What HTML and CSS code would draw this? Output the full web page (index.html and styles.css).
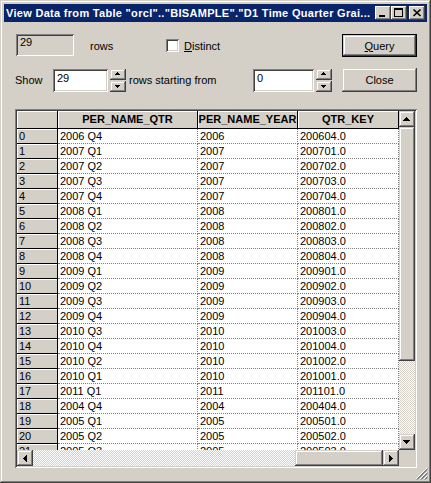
FILE: index.html
```html
<html>
<head>
    <title>View Data</title>
    <meta http-equiv="Content-Type" content="text/html; charset=UTF-8"/>
    <link rel="stylesheet" href="styles.css">
</head>
<body>
<div class="window">
    <div class="titlebar">
        <span class="title">View Data from Table "orcl".."BISAMPLE"."D1 Time Quarter Grai...</span>
        <div class="caption-btns">
            <div class="cbtn"><svg width="16" height="14"><rect x="4" y="9" width="6" height="2" fill="#000"/></svg></div>
            <div class="cbtn"><svg width="16" height="14"><path d="M3 2h9v9H3z M4 4v6h7V4z" fill="#000" fill-rule="evenodd"/></svg></div>
            <div class="cbtn cbtn-close"><svg width="16" height="14"><path d="M4.5 3.5l7 6.5M11.5 3.5l-7 6.5" stroke="#000" stroke-width="1.7"/></svg></div>
        </div>
    </div>
    <div class="content">
        <div class="row row-top">
            <div class="ro-field">29</div>
            <span class="lbl-rows">rows</span>
            <span class="check"></span>
            <span class="lbl-distinct"><u>D</u>istinct</span>
            <div class="btn btn-default"><u>Q</u>uery</div>
        </div>
        <div class="row row-show">
            <span class="lbl-show">Show</span>
            <div class="field">29</div>
            <div class="spin">
                <div class="spin-btn"><svg width="15" height="10"><path d="M7 3h1v1h1v1h1v1H5V5h1V4h1z" fill="#000"/></svg></div>
                <div class="spin-btn"><svg width="15" height="10"><path d="M5 4h5v1H9v1H8v1H7V6H6V5H5z" fill="#000"/></svg></div>
            </div>
            <span class="lbl-start">rows starting from</span>
            <div class="field field-wide">0</div>
            <div class="spin">
                <div class="spin-btn"><svg width="15" height="10"><path d="M7 3h1v1h1v1h1v1H5V5h1V4h1z" fill="#000"/></svg></div>
                <div class="spin-btn"><svg width="15" height="10"><path d="M5 4h5v1H9v1H8v1H7V6H6V5H5z" fill="#000"/></svg></div>
            </div>
            <div class="btn btn-close">Close</div>
        </div>
        <div class="grid-frame">
            <div class="grid-inner">
                <div class="table-view">
                    <table class="data">
                        <colgroup>
                            <col style="width:41px">
                            <col style="width:140px">
                            <col style="width:100px">
                            <col style="width:101px">
                        </colgroup>
                        <tr><th class="colhead"></th><th class="colhead">PER_NAME_QTR</th><th class="colhead">PER_NAME_YEAR</th><th class="colhead">QTR_KEY</th></tr>
                        <tr><th class="rowhead">0</th><td>2006 Q4</td><td>2006</td><td>200604.0</td></tr>
                        <tr><th class="rowhead">1</th><td>2007 Q1</td><td>2007</td><td>200701.0</td></tr>
                        <tr><th class="rowhead">2</th><td>2007 Q2</td><td>2007</td><td>200702.0</td></tr>
                        <tr><th class="rowhead">3</th><td>2007 Q3</td><td>2007</td><td>200703.0</td></tr>
                        <tr><th class="rowhead">4</th><td>2007 Q4</td><td>2007</td><td>200704.0</td></tr>
                        <tr><th class="rowhead">5</th><td>2008 Q1</td><td>2008</td><td>200801.0</td></tr>
                        <tr><th class="rowhead">6</th><td>2008 Q2</td><td>2008</td><td>200802.0</td></tr>
                        <tr><th class="rowhead">7</th><td>2008 Q3</td><td>2008</td><td>200803.0</td></tr>
                        <tr><th class="rowhead">8</th><td>2008 Q4</td><td>2008</td><td>200804.0</td></tr>
                        <tr><th class="rowhead">9</th><td>2009 Q1</td><td>2009</td><td>200901.0</td></tr>
                        <tr><th class="rowhead">10</th><td>2009 Q2</td><td>2009</td><td>200902.0</td></tr>
                        <tr><th class="rowhead">11</th><td>2009 Q3</td><td>2009</td><td>200903.0</td></tr>
                        <tr><th class="rowhead">12</th><td>2009 Q4</td><td>2009</td><td>200904.0</td></tr>
                        <tr><th class="rowhead">13</th><td>2010 Q3</td><td>2010</td><td>201003.0</td></tr>
                        <tr><th class="rowhead">14</th><td>2010 Q4</td><td>2010</td><td>201004.0</td></tr>
                        <tr><th class="rowhead">15</th><td>2010 Q2</td><td>2010</td><td>201002.0</td></tr>
                        <tr><th class="rowhead">16</th><td>2010 Q1</td><td>2010</td><td>201001.0</td></tr>
                        <tr><th class="rowhead">17</th><td>2011 Q1</td><td>2011</td><td>201101.0</td></tr>
                        <tr><th class="rowhead">18</th><td>2004 Q4</td><td>2004</td><td>200404.0</td></tr>
                        <tr><th class="rowhead">19</th><td>2005 Q1</td><td>2005</td><td>200501.0</td></tr>
                        <tr><th class="rowhead">20</th><td>2005 Q2</td><td>2005</td><td>200502.0</td></tr>
                        <tr><th class="rowhead">21</th><td>2005 Q3</td><td>2005</td><td>200503.0</td></tr>
                    </table>
                </div>
                <div class="vscroll">
                    <div class="sb-btn"><svg width="16" height="16"><path d="M7 6h1v1h1v1h1v1h1v1H4V9h1V8h1V7h1z" fill="#000"/></svg></div>
                    <div class="sb-thumb sb-thumb-v"></div>
                    <div class="sb-track"></div>
                    <div class="sb-btn"><svg width="16" height="16"><path d="M4 6h7v1h-1v1h-1v1h-1v1H7V9H6V8H5V7H4z" fill="#000"/></svg></div>
                </div>
                <div class="hscroll">
                    <div class="sb-btn"><svg width="16" height="16"><path d="M6 8h1V7h1V6h1V5h1v7H9v-1H8v-1H7V9H6z" fill="#000"/></svg></div>
                    <div class="sb-track"></div>
                    <div class="sb-thumb sb-thumb-h"></div>
                    <div class="sb-btn"><svg width="16" height="16"><path d="M6 5h1v1h1v1h1v1h1v1H9v1H8v1H7v1H6z" fill="#000"/></svg></div>
                </div>
                <div class="corner"></div>
            </div>
        </div>
    </div>
    <svg class="grip" width="12" height="12">
        <path d="M11 0L0 11M11 4L4 11M11 8L8 11" stroke="#fff" stroke-width="1"/>
        <path d="M11.5 0.5L0.5 11.5M11.5 1.5L1.5 11.5M11.5 4.5L4.5 11.5M11.5 5.5L5.5 11.5M11.5 8.5L8.5 11.5M11.5 9.5L9.5 11.5" stroke="#808080" stroke-width="1"/>
    </svg>
</div>
</body>
</html>
```

FILE: styles.css
```css
* {
    box-sizing: border-box;
}

html, body {
    margin: 0px;
    background: #D4D0C8;
    color: #000;
    font-family: "Liberation Sans", Arial, sans-serif;
    font-size: 11px;
}

/* window frame */
.window {
    position: relative;
    width: 431px;
    height: 483px;
    padding: 4px;
    background: #D4D0C8;
    box-shadow: inset -1px -1px #404040, inset 1px 1px #D4D0C8, inset -2px -2px #808080, inset 2px 2px #fff;
    display: flex;
    flex-direction: column;
}

.titlebar {
    height: 18px;
    background: #0A246A;
    color: #fff;
    font-weight: bold;
    display: flex;
    align-items: center;
    padding: 0 2px;
    flex: none;
}

.title {
    flex: 1;
    white-space: nowrap;
    overflow: hidden;
    letter-spacing: 0.3px;
}

.caption-btns {
    display: flex;
}

.cbtn {
    width: 16px;
    height: 14px;
    background: #D4D0C8;
    box-shadow: inset -1px -1px #404040, inset 1px 1px #fff, inset -2px -2px #808080;
}

.cbtn svg, .sb-btn svg, .spin-btn svg {
    display: block;
}

.cbtn-close {
    margin-left: 2px;
}

/* 3d bits */
.btn, .sb-btn, .sb-thumb, .spin-btn {
    background: #D4D0C8;
    box-shadow: inset -1px -1px #404040, inset 1px 1px #D4D0C8, inset -2px -2px #808080, inset 2px 2px #fff;
}

.ro-field, .field, .check {
    box-shadow: inset 1px 1px #808080, inset -1px -1px #fff, inset 2px 2px #404040, inset -2px -2px #D4D0C8;
}

/* controls */
.content {
    flex: 1;
    display: flex;
    flex-direction: column;
}

.row {
    display: flex;
    align-items: center;
    flex: none;
}

.row-top {
    margin-top: 12px;
    height: 23px;
}

.row-show {
    margin-top: 11px;
    height: 24px;
}

.ro-field {
    margin-left: 12px;
    width: 58px;
    height: 22px;
    padding: 2px 4px;
    align-self: flex-start;
    background: #D4D0C8;
}

.lbl-rows {
    margin-left: 16px;
    width: 76px;
}

.check {
    width: 13px;
    height: 13px;
    background: #fff;
}

.lbl-distinct {
    margin-left: 5px;
    flex: 1;
}

.btn {
    width: 75px;
    height: 23px;
    margin-right: 10px;
    display: flex;
    align-items: center;
    justify-content: center;
}

.btn-default {
    border: 1px solid #000;
}

.btn-close {
    margin-left: 10px;
    height: 24px;
}

.lbl-show {
    margin-left: 11px;
    width: 38px;
}

.field {
    width: 55px;
    height: 23px;
    padding: 3px 4px 0;
    background: #fff;
}

.field-wide {
    width: 61px;
}

.spin {
    margin-left: 2px;
    width: 16px;
    height: 23px;
    display: flex;
    flex-direction: column;
    gap: 1px;
}

.spin-btn {
    flex: 1;
}

.lbl-start {
    margin-left: 3px;
    width: 124px;
}

/* data grid */
.grid-frame {
    margin: 17px 0 0 11px;
    width: 402px;
    height: 359px;
    padding: 2px;
    box-shadow: inset 1px 1px #808080, inset -1px -1px #fff, inset 2px 2px #404040, inset -2px -2px #D4D0C8;
}

.grid-inner {
    display: grid;
    grid-template-columns: 382px 16px;
    grid-template-rows: 339px 16px;
    height: 100%;
}

.table-view {
    overflow: hidden;
    background: #fff;
}

.data {
    border-collapse: separate;
    border-spacing: 0;
    table-layout: fixed;
    width: 382px;
    font-size: 11px;
}

.data th, .data td {
    padding: 0;
    white-space: nowrap;
    overflow: hidden;
    line-height: 13px;
}

.colhead {
    height: 18px;
    background: #D4D0C8;
    text-align: center;
    font-weight: bold;
    box-shadow: inset 1px 1px #fff;
    border-right: 1px solid #000;
    border-bottom: 1px solid #000;
}

.rowhead {
    height: 15px;
    padding-left: 2px !important;
    text-align: left;
    font-weight: normal;
    background: #D4D0C8;
    box-shadow: inset 1px 1px #fff;
    border-right: 1px solid #000;
    border-bottom: 1px solid #000;
}

.data td {
    height: 15px;
    padding-left: 2px;
    border-right: 1px dotted #808080;
    border-bottom: 1px dotted #808080;
}

.vscroll {
    display: flex;
    flex-direction: column;
}

.hscroll {
    display: flex;
}

.sb-btn {
    width: 16px;
    height: 16px;
    flex: none;
}

.sb-track {
    flex: 1;
    background: repeating-conic-gradient(#fff 0 25%, #D4D0C8 0 50%) 0 0 / 2px 2px;
}

.sb-thumb-v {
    height: 234px;
    flex: none;
}

.sb-thumb-h {
    width: 88px;
    flex: none;
}

.corner {
    background: #D4D0C8;
}

.grip {
    position: absolute;
    right: 3px;
    bottom: 3px;
}
```
